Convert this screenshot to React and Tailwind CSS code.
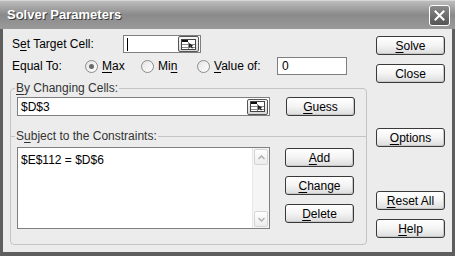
import React from 'react'

function U({ children }) {
  return <span className="underline underline-offset-[2px]">{children}</span>
}

function Btn({ children, className = '' }) {
  return (
    <button
      className={
        'w-[69px] h-[19px] flex items-center justify-center rounded-[3px] border border-[#3a3a3a] bg-gradient-to-b from-white via-[#f4f4f4] to-[#dcdcdc] text-[12px] leading-none text-black shadow-[inset_-1px_-1px_0_#c8c8c8] ' +
        className
      }
    >
      {children}
    </button>
  )
}

function RefEdit() {
  return (
    <div className="w-[21px] h-[16px] rounded-[2px] border border-[#555] bg-gradient-to-b from-[#f8f8f8] to-[#d8d8d8] flex items-center justify-center">
      <svg width="15" height="11" viewBox="0 0 15 11">
        <rect x="0.5" y="0.5" width="14" height="10" fill="#fff" stroke="#444" />
        <rect x="1" y="1" width="6" height="2" fill="#111" />
        <line x1="1" y1="5.5" x2="14" y2="5.5" stroke="#888" />
        <line x1="1" y1="8.5" x2="14" y2="8.5" stroke="#888" />
        <line x1="7.5" y1="3" x2="7.5" y2="10" stroke="#888" />
        <path d="M8 4 L8 9 L9.5 7.5 L11 9.5 L12 9 L10.8 7 L12.5 7 Z" fill="#222" />
      </svg>
    </div>
  )
}

function Radio({ checked, children, className = '' }) {
  return (
    <div className={'flex items-center ' + className}>
      <span className="w-[13px] h-[13px] rounded-full border border-[#8a8a8a] bg-gradient-to-br from-[#e4e4e4] to-white flex items-center justify-center">
        {checked && <span className="w-[5px] h-[5px] rounded-full bg-[#6a6a6a]" />}
      </span>
      <span className="ml-[4px]">{children}</span>
    </div>
  )
}

export default function App() {
  return (
    <div className="w-[455px] h-[256px] flex flex-col bg-[#5e5e5e] font-['Liberation_Sans',Arial,sans-serif] text-[12px] text-black overflow-hidden">
      {/* title bar */}
      <div className="h-[29px] shrink-0 flex items-center justify-between pl-[7px] pr-[5px] bg-gradient-to-b from-[#bdbdbd] via-[#8a8a8a] to-[#9a9a9a] border-t border-[#d6d6d6]">
        <span className="text-white font-bold text-[13px] [text-shadow:1px_1px_0_#3a3a3a]">Solver Parameters</span>
        <div className="w-[21px] h-[21px] rounded-[3px] border border-white bg-gradient-to-b from-[#8a8a8a] to-[#555] flex items-center justify-center">
          <svg width="11" height="11" viewBox="0 0 11 11">
            <path d="M1.5 1.5 L9.5 9.5 M9.5 1.5 L1.5 9.5" stroke="#fff" strokeWidth="2" strokeLinecap="square" />
          </svg>
        </div>
      </div>

      {/* body */}
      <div className="flex-1 mx-[3px] mb-[4px] bg-[#ececec] flex">
        <div className="w-[364px] pl-[9px] pt-[6px]">
          <div className="flex items-center h-[18px]">
            <span className="w-[111px]">
              S<U>e</U>t Target Cell:
            </span>
            <div className="w-[78px] h-[18px] border border-[#7f7f7f] bg-white flex items-center justify-between pl-[3px] pr-[1px]">
              <span className="w-px h-[13px] bg-black" />
              <RefEdit />
            </div>
          </div>

          <div className="flex items-center h-[18px] mt-[4px]">
            <span className="w-[73px]">Equal To:</span>
            <Radio checked className="w-[56px]">
              <U>M</U>ax
            </Radio>
            <Radio className="w-[56px]">
              Mi<U>n</U>
            </Radio>
            <Radio className="w-[80px]">
              <U>V</U>alue of:
            </Radio>
            <div className="w-[70px] h-[18px] border border-[#7f7f7f] bg-white flex items-center pl-[4px]">0</div>
          </div>

          <fieldset className="mt-[6px] -ml-[2px] w-[357px] border border-[#c4c4c4] rounded-[4px] pb-[15px]">
            <legend className="ml-[4px] px-[1px] text-[#333] leading-[14px]">
              <U>B</U>y Changing Cells:
            </legend>
            <div className="flex items-center mt-[2px] ml-[6px]">
              <div className="w-[253px] h-[19px] border border-[#7f7f7f] bg-white flex items-center justify-between pl-[3px] pr-[1px]">
                <span>$D$3</span>
                <RefEdit />
              </div>
              <Btn className="ml-[16px] w-[67px]">
                <U>G</U>uess
              </Btn>
            </div>

            <fieldset className="mt-[13px] border-t border-[#c4c4c4]">
              <legend className="ml-[4px] px-[1px] text-[#333] leading-[14px]">
                S<U>u</U>bject to the Constraints:
              </legend>
              <div className="flex mt-[4px] ml-[6px]">
                <div className="w-[253px] h-[82px] border border-[#7f7f7f] bg-white flex">
                  <div className="flex-1 pl-[3px] pt-[3px]">$E$112 = $D$6</div>
                  <div className="w-[17px] flex flex-col bg-[#f5f5f5] border-l border-[#e8e8e8]">
                    <div className="h-[16px] m-px rounded-[2px] border border-[#d4d4d4] bg-gradient-to-b from-white to-[#ececec] flex items-center justify-center">
                      <svg width="7" height="5" viewBox="0 0 7 5">
                        <path d="M0.5 4 L3.5 1 L6.5 4" fill="none" stroke="#b0b0b0" strokeWidth="1.5" />
                      </svg>
                    </div>
                    <div className="flex-1" />
                    <div className="h-[16px] m-px rounded-[2px] border border-[#d4d4d4] bg-gradient-to-b from-white to-[#ececec] flex items-center justify-center">
                      <svg width="7" height="5" viewBox="0 0 7 5">
                        <path d="M0.5 1 L3.5 4 L6.5 1" fill="none" stroke="#b0b0b0" strokeWidth="1.5" />
                      </svg>
                    </div>
                  </div>
                </div>
                <div className="ml-[15px] mt-px flex flex-col gap-[9px]">
                  <Btn className="w-[67px]">
                    <U>A</U>dd
                  </Btn>
                  <Btn className="w-[67px]">
                    <U>C</U>hange
                  </Btn>
                  <Btn className="w-[67px]">
                    <U>D</U>elete
                  </Btn>
                </div>
              </div>
            </fieldset>
          </fieldset>
        </div>

        <div className="ml-[9px] pt-[7px] flex flex-col">
          <Btn>
            <U>S</U>olve
          </Btn>
          <Btn className="mt-[9px]">Close</Btn>
          <Btn className="mt-[45px]">
            <U>O</U>ptions
          </Btn>
          <Btn className="mt-[44px]">
            <U>R</U>eset All
          </Btn>
          <Btn className="mt-[9px]">
            <U>H</U>elp
          </Btn>
        </div>
      </div>
    </div>
  )
}
